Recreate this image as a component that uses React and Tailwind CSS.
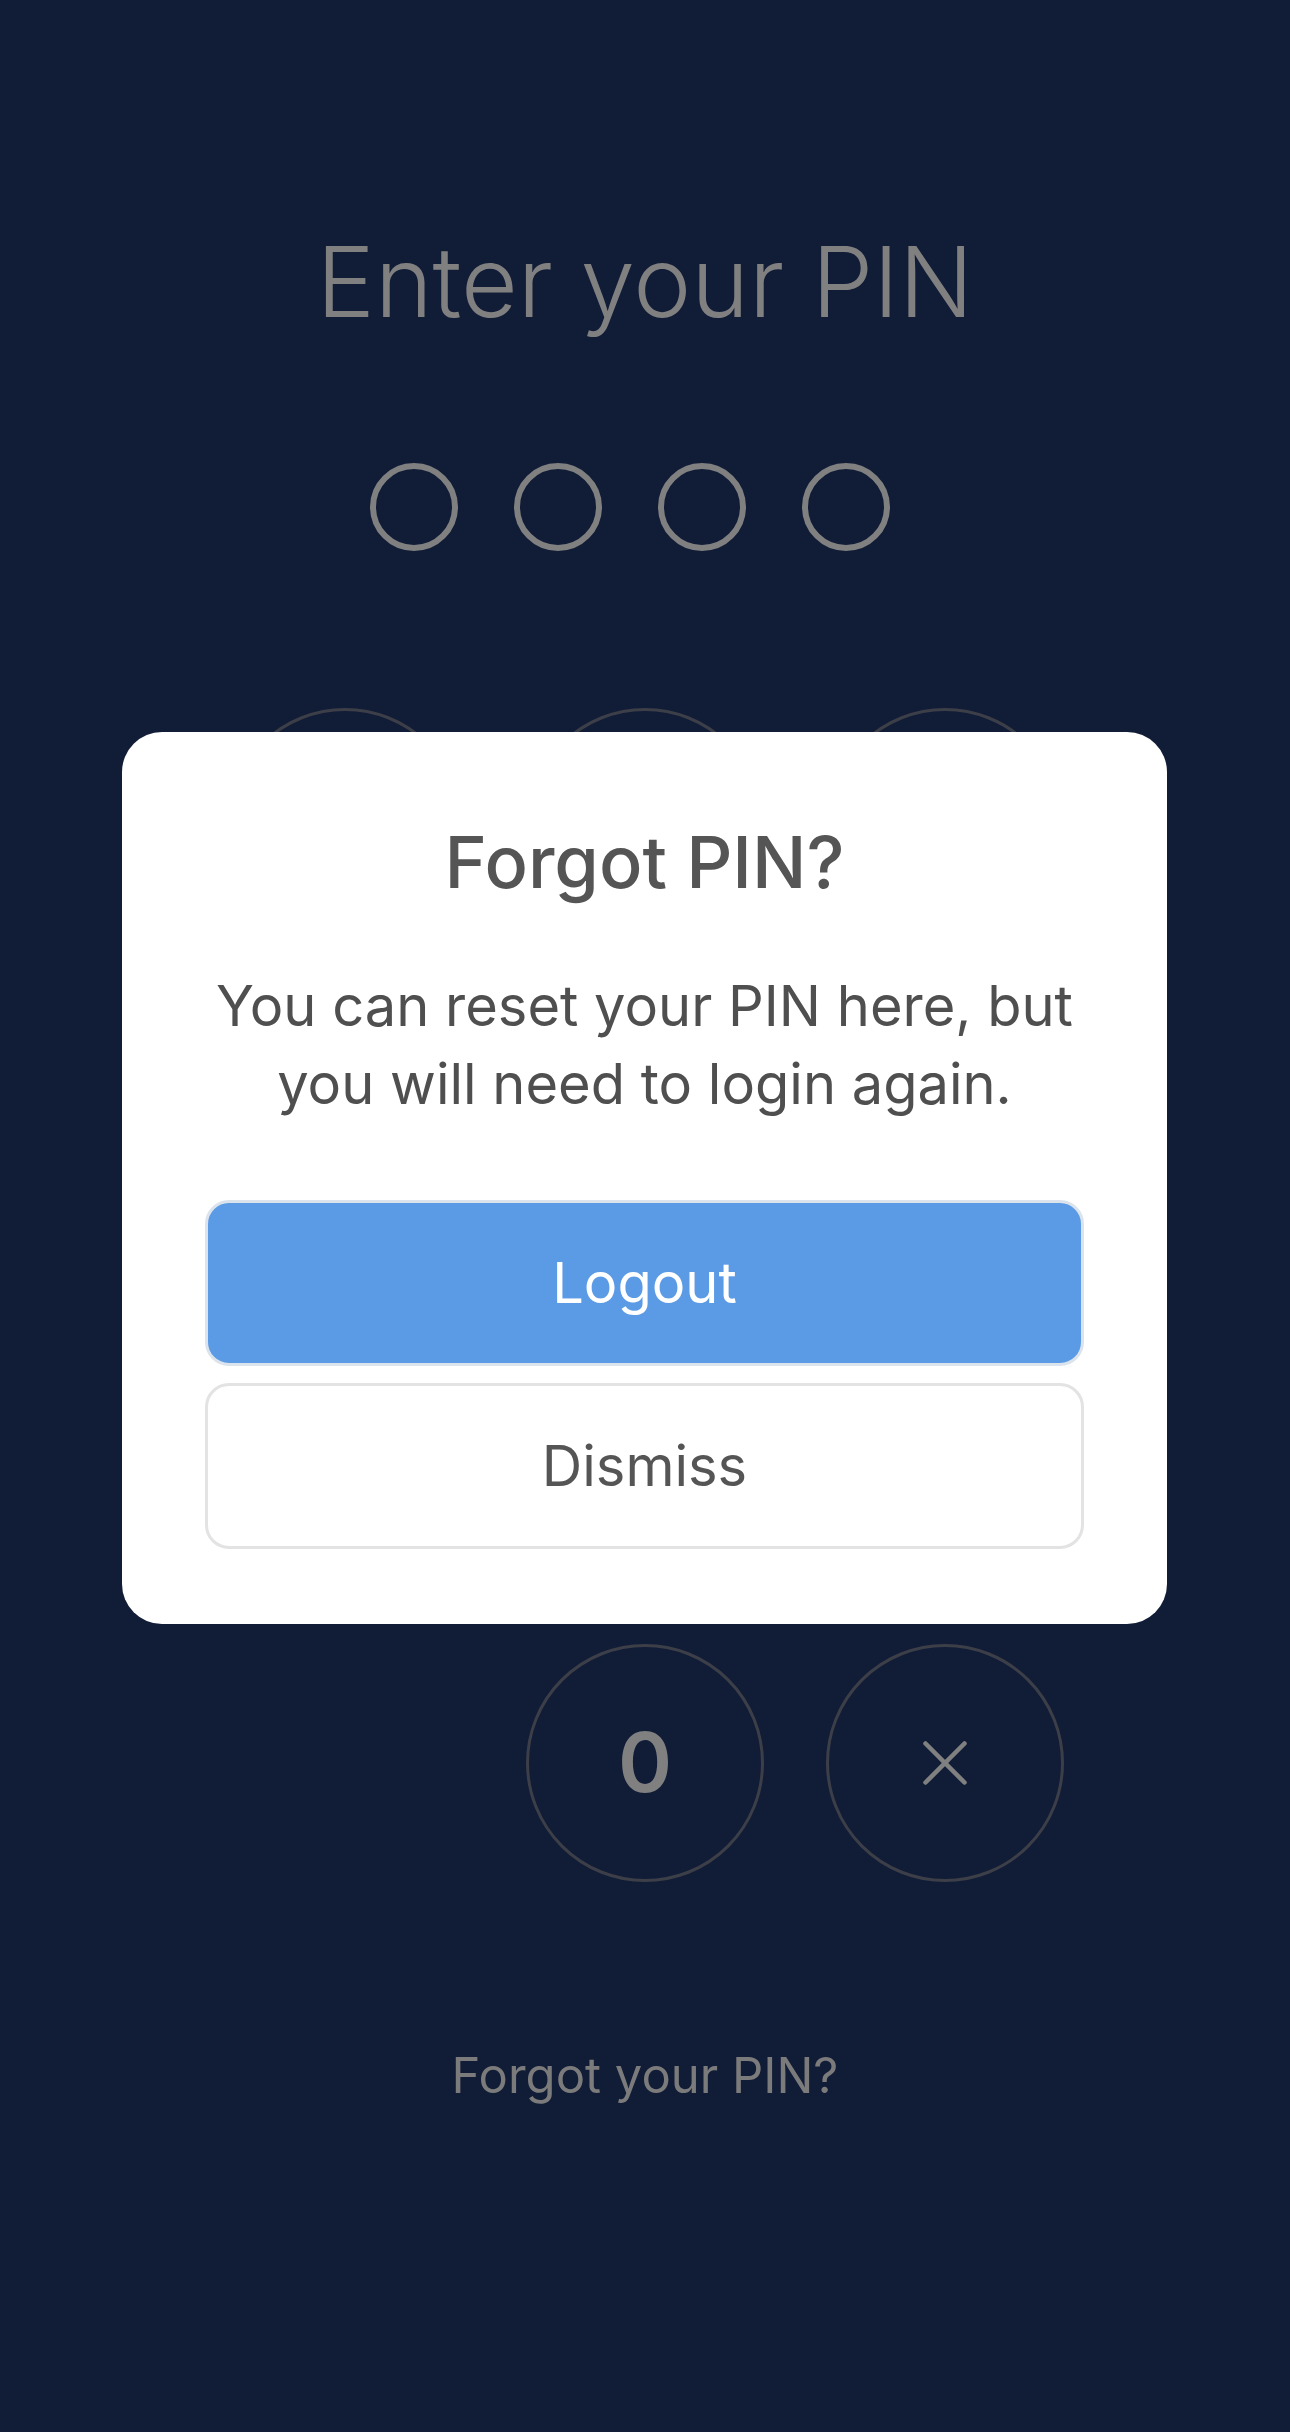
import { X } from 'lucide-react'

const keys = ['1', '2', '3', '4', '5', '6', '7', '8', '9', '', '0', 'del']

function PinDot() {
  return <div className="w-[88px] h-[88px] rounded-full border-[6px] border-[#808080]" />
}

function Key({ k }) {
  if (!k) return <div className="w-[238px] h-[238px]" />
  return (
    <div className="w-[238px] h-[238px] rounded-full border-[3px] border-[#3c3f48] flex items-center justify-center text-[#808080]">
      {k === 'del' ? (
        <X size={78} strokeWidth={1.4} />
      ) : (
        <span className="text-[82px] font-semibold leading-none">{k}</span>
      )}
    </div>
  )
}

export default function App() {
  return (
    <div
      className="relative w-full min-h-[2432px] bg-[#111c37] flex flex-col items-center"
      style={{ fontFamily: 'Inter, "Noto Sans", sans-serif' }}
    >
      <h1 className="mt-[217px] text-[98px] font-light text-[#808080] leading-[130px]">
        Enter your PIN
      </h1>

      <div className="mt-[116px] mr-[30px] flex gap-[56px]">
        <PinDot />
        <PinDot />
        <PinDot />
        <PinDot />
      </div>

      <div className="mt-[157px] grid grid-cols-3 gap-x-[62px] gap-y-[74px]">
        {keys.map((k, i) => (
          <Key key={i} k={k} />
        ))}
      </div>

      <p className="mt-[164px] text-[49px] text-[#7b7b7b] leading-[60px]">Forgot your PIN?</p>

      {/* modal */}
      <div className="absolute left-[122px] top-[732px] w-[1045px] h-[892px] bg-white rounded-[40px] px-[83px] pt-[82px] flex flex-col items-center">
        <h2 className="text-[72px] font-medium text-[#555555] leading-[96px]">Forgot PIN?</h2>
        <p className="mt-[57px] text-[56px] text-[#4f4f4f] leading-[78px] text-center">
          You can reset your PIN here, but you will need to login again.
        </p>
        <button className="mt-[77px] w-full h-[166px] rounded-[24px] bg-[#5b9ae4] border-[3px] border-[#dbe3ec] text-white text-[56px]">
          Logout
        </button>
        <button className="mt-[17px] w-full h-[166px] rounded-[24px] bg-white border-[3px] border-[#e3e3e3] text-[#555555] text-[56px]">
          Dismiss
        </button>
      </div>
    </div>
  )
}
